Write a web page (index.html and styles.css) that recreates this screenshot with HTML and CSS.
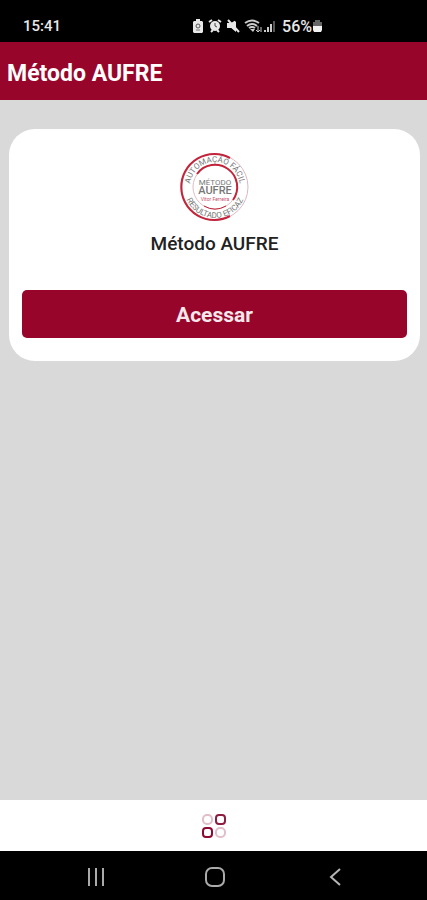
FILE: index.html
```html
<!DOCTYPE html>
<html lang="pt-BR">
<head>
  <meta charset="UTF-8">
  <meta name="viewport" content="width=device-width, initial-scale=1.0">
  <title>Método AUFRE</title>
  <link rel="stylesheet" href="styles.css">
</head>
<body>
  <div class="status-bar">
    <span class="clock">15:41</span>
    <div class="status-icons">
      <svg width="12" height="14" viewBox="0 0 12 14">
        <path d="M4 0h4v2h2l1 1v10l-1 1H2l-1-1V3l1-1h2z" fill="#e8e8e8"/>
        <circle cx="6" cy="7" r="2" fill="none" stroke="#555"/>
        <path d="M4 11h4" stroke="#777"/>
      </svg>
      <svg width="14" height="14" viewBox="0 0 14 14">
        <path d="M1 3l3-2M13 3l-3-2M3 13l2-2M11 13l-2-2" stroke="#e8e8e8" stroke-width="2"/>
        <circle cx="7" cy="7" r="5" fill="#e8e8e8"/>
        <path d="M7 4v3l2 1" fill="none" stroke="#444"/>
      </svg>
      <svg width="14" height="14" viewBox="0 0 14 14">
        <path d="M1 4h4l5-3v12L5 9H1z" fill="#e8e8e8"/>
        <path d="M7 0l7 7v-7zM1 9h4l5 5H1z" fill="#000"/>
        <path d="M2 1l11 12" stroke="#e8e8e8" stroke-width="2"/>
      </svg>
      <svg class="wifi" width="18" height="14" viewBox="0 0 18 14">
        <path d="M1 4q7-5 14 0M3 7q5-4 10 0M5 9q3-2 6 0" fill="none" stroke="#ccc" stroke-width="2"/>
        <path d="M6 10h5l-2 3z" fill="#ccc"/>
        <path d="M14 7v6M12 11l2 2 2-2M17 8v5" fill="none" stroke="#ccc"/>
      </svg>
      <svg width="13" height="14" viewBox="0 0 13 14">
        <path d="M1 11h2v2H1zM4 8h2v5H4zM7 5h2v8H7z" fill="#ccc"/>
        <path d="M10 2h2v11h-2z" fill="#555"/>
      </svg>
      <span class="percent">56%</span>
      <svg width="11" height="14" viewBox="0 0 11 14">
        <path d="M3 1h5v2h2v4H1V3h2z" fill="#666"/>
        <path d="M1 7h9v4l-1 2H2l-1-2z" fill="#f2f2f2"/>
      </svg>
    </div>
  </div>

  <header class="app-header">
    <h1>Método AUFRE</h1>
  </header>

  <main>
    <section class="card">
      <!-- Selo -->
      <svg class="stamp" width="70" height="70" viewBox="0 0 70 70" role="img" aria-label="Selo Método AUFRE">
        <defs>
          <path id="arc-top" d="M10 35a25 25 0 0 1 50 0"/>
          <path id="arc-bottom" d="M4 35a31 31 0 0 0 62 0"/>
        </defs>
        <circle cx="35" cy="35" r="33" fill="none" stroke="#dfb6bc"/>
        <path d="M50 6A33 33 0 1 0 50 64" fill="none" stroke="#c3243b" stroke-width="2"/>
        <circle cx="35" cy="35" r="22" fill="none" stroke="#e0bcc1"/>
        <path d="M17 22A22 22 0 0 1 53 48" fill="none" stroke="#c3243b" stroke-width="2"/>
        <path d="M24 54a22 22 0 0 0 22 0" fill="none" stroke="#c3243b"/>
        <text class="stamp-ring"><textPath href="#arc-top" startOffset="50%">AUTOMAÇÃO FÁCIL</textPath></text>
        <text class="stamp-ring"><textPath href="#arc-bottom" startOffset="50%">RESULTADO EFICAZ</textPath></text>
        <text class="stamp-small" x="35" y="33">MÉTODO</text>
        <text class="stamp-big" x="35" y="42">AUFRE</text>
        <text class="stamp-note" x="35" y="49">Vitor Ferreira</text>
      </svg>
      <h2>Método AUFRE</h2>
      <button class="access-btn" type="button">Acessar</button>
    </section>
  </main>

  <nav class="tab-bar">
    <a href="#" aria-label="Início">
      <svg width="26" height="26" viewBox="0 0 26 26" fill="none" stroke-width="2">
        <rect x="2" y="2" width="9" height="9" rx="4" stroke="#e0bfc9"/>
        <rect x="15" y="2" width="9" height="9" rx="3" stroke="#8d1d40"/>
        <rect x="2" y="15" width="9" height="9" rx="3" stroke="#8d0b33"/>
        <rect x="15" y="15" width="9" height="9" rx="4" stroke="#e0bfc9"/>
      </svg>
    </a>
  </nav>

  <div class="system-nav">
    <button type="button" aria-label="Recentes">
      <svg width="20" height="20" viewBox="0 0 20 20">
        <path d="M3 1v18M10 1v18M17 1v18" stroke="#aaa" stroke-width="2"/>
      </svg>
    </button>
    <button type="button" aria-label="Tela inicial">
      <svg width="20" height="20" viewBox="0 0 20 20">
        <rect x="1" y="1" width="18" height="18" rx="6" fill="none" stroke="#aaa" stroke-width="2"/>
      </svg>
    </button>
    <button type="button" aria-label="Voltar">
      <svg width="20" height="20" viewBox="0 0 20 20">
        <path d="M15 2l-9 8 9 8" fill="none" stroke="#b5b5b5" stroke-width="2"/>
      </svg>
    </button>
  </div>
</body>
</html>
```
FILE: styles.css
```css
* {
  box-sizing: border-box;
}

body {
  margin: 0;
  min-height: 100vh;
  display: flex;
  flex-direction: column;
  background-color: #d9d9d9;
  font-family: Roboto, "Liberation Sans", sans-serif;
}

svg {
  display: block;
}

h1,
h2 {
  margin: 0;
}

.status-bar {
  height: 42px;
  padding: 10px 104px 0 23px;
  display: flex;
  align-items: center;
  justify-content: space-between;
  background-color: #000;
  color: #e8e8e8;
  font-size: 16px;
  font-weight: 500;
}

.clock {
  font-size: 15px;
}

.status-icons {
  display: flex;
  align-items: center;
  gap: 4px;
}

.wifi {
  margin-right: -3px;
}

.percent {
  margin: 0 -4px 0 2px;
}

.app-header {
  height: 58px;
  padding: 5px 7px 0;
  display: flex;
  align-items: center;
  background-color: #98052b;
  color: #fff;
}

.app-header h1 {
  font-size: 23px;
  line-height: 28px;
  font-weight: 700;
}

main {
  flex: 1;
  padding: 29px 7px 29px 9px;
}

.card {
  padding: 23px 13px;
  display: flex;
  flex-direction: column;
  align-items: center;
  background-color: #fff;
  border-radius: 26px;
}

.card h2 {
  margin: 10px 0 34px;
  color: #222;
  font-size: 19px;
  line-height: 24px;
  font-weight: 500;
}

.access-btn {
  width: 100%;
  height: 48px;
  padding: 2px 0 0;
  border: none;
  border-radius: 5px;
  background-color: #98052b;
  color: #f5e8ec;
  font-family: inherit;
  font-size: 21px;
  font-weight: 700;
  cursor: pointer;
}

.stamp text {
  text-anchor: middle;
  fill: #777;
}

.stamp .stamp-ring {
  font-size: 8px;
}

.stamp .stamp-small {
  font-size: 8px;
}

.stamp .stamp-big {
  font-size: 11px;
  font-weight: 500;
}

.stamp .stamp-note {
  font-size: 5px;
  fill: #c5506d;
}

.tab-bar {
  height: 51px;
  display: flex;
  align-items: center;
  justify-content: center;
  background-color: #fff;
}

.system-nav {
  height: 49px;
  padding: 3px 32px 0 36px;
  display: grid;
  grid-template-columns: repeat(3, 1fr);
  align-items: center;
  justify-items: center;
  background-color: #000;
}

.system-nav button {
  padding: 0;
  border: none;
  background: none;
  cursor: pointer;
}
```
